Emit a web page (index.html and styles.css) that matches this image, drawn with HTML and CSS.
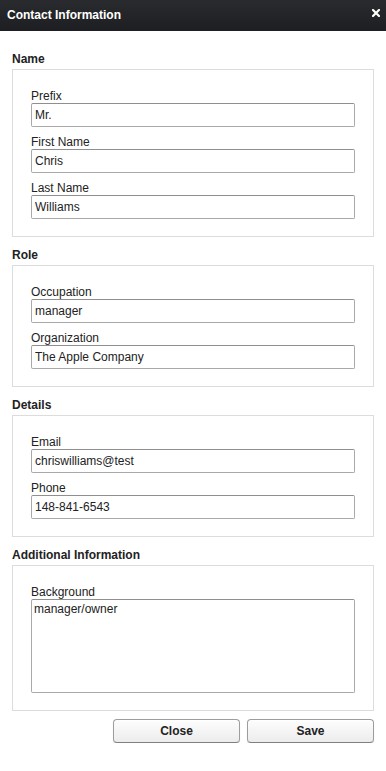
FILE: index.html
```html
<!DOCTYPE html>
<html>
<head>
<meta charset="utf-8">
<link rel="stylesheet" href="styles.css">
</head>
<body>
<div class="dialog">
  <div class="titlebar">
    <span class="title">Contact Information</span>
    <span class="close-x"><svg width="8" height="8" viewBox="0 0 8 8"><path d="M1 1 L7 7 M7 1 L1 7" stroke="#fff" stroke-width="2.2" stroke-linecap="square"/></svg></span>
  </div>
  <div class="content">
    <div class="section">
      <div class="section-title">Name</div>
      <div class="box">
        <div class="field"><label class="label">Prefix</label><input class="input" type="text" value="Mr."></div>
        <div class="field"><label class="label">First Name</label><input class="input" type="text" value="Chris"></div>
        <div class="field"><label class="label">Last Name</label><input class="input" type="text" value="Williams"></div>
      </div>
    </div>
    <div class="section">
      <div class="section-title">Role</div>
      <div class="box">
        <div class="field"><label class="label">Occupation</label><input class="input" type="text" value="manager"></div>
        <div class="field"><label class="label">Organization</label><input class="input" type="text" value="The Apple Company"></div>
      </div>
    </div>
    <div class="section">
      <div class="section-title">Details</div>
      <div class="box">
        <div class="field"><label class="label">Email</label><input class="input" type="text" value="chriswilliams@test"></div>
        <div class="field"><label class="label">Phone</label><input class="input" type="text" value="148-841-6543"></div>
      </div>
    </div>
    <div class="section">
      <div class="section-title">Additional Information</div>
      <div class="box">
        <div class="field"><label class="label">Background</label><textarea class="textarea">manager/owner</textarea></div>
      </div>
    </div>
    <div class="actions">
      <button class="btn" type="button">Close</button>
      <button class="btn" type="button">Save</button>
    </div>
  </div>
</div>
</body>
</html>
```

FILE: styles.css
```css
* { box-sizing: border-box; }
html, body { margin: 0; padding: 0; background: #fff; }
body {
  font-family: "Liberation Sans", Arial, sans-serif;
  font-size: 12px;
  color: #222;
}
.dialog { width: 386px; }
.titlebar {
  height: 31px;
  background: linear-gradient(#2a2b2e, #1d1e21);
  display: flex;
  align-items: center;
  justify-content: space-between;
  padding: 0 6px 0 7px;
}
.title {
  color: #fff;
  font-weight: bold;
  font-size: 12px;
  line-height: 31px;
}
.close-x { display: flex; width: 8px; height: 8px; margin-top: -5px; }
.content { padding: 21px 12px 0 12px; }
.section + .section { margin-top: 11px; }
.section-title {
  font-weight: bold;
  font-size: 12px;
  line-height: 14px;
  margin-bottom: 3px;
  color: #222;
}
.box {
  border: 1px solid #dcdcdc;
  padding: 19px 18px 9px 18px;
}
.field { display: flex; flex-direction: column; margin-bottom: 8px; }
.label { line-height: 14px; height: 14px; color: #222; }
.input, .textarea {
  font-family: "Liberation Sans", Arial, sans-serif;
  font-size: 12px;
  color: #222;
  border: 1px solid #a9a9a9;
  border-top-color: #8f8f8f;
  border-radius: 2px;
  margin: 0;
  width: 324px;
  background: #fff;
  outline: none;
}
.input { height: 24px; padding: 0 3px; }
.textarea { height: 94px; padding: 2px 2px; resize: none; line-height: 14px; display: block; }
.actions {
  display: flex;
  justify-content: flex-end;
  gap: 7px;
  margin-top: 8px;
}
.btn {
  width: 127px;
  height: 24px;
  font-family: "Liberation Sans", Arial, sans-serif;
  font-size: 12px;
  font-weight: bold;
  color: #222;
  background: linear-gradient(#fdfdfd, #ececec);
  border: 1px solid #9d9d9d;
  border-bottom-color: #7f7f7f;
  border-radius: 4px;
  box-shadow: inset 0 1px 0 #fff, 0 1px 1px rgba(0,0,0,0.15);
  padding: 0;
  margin: 0;
}
```
